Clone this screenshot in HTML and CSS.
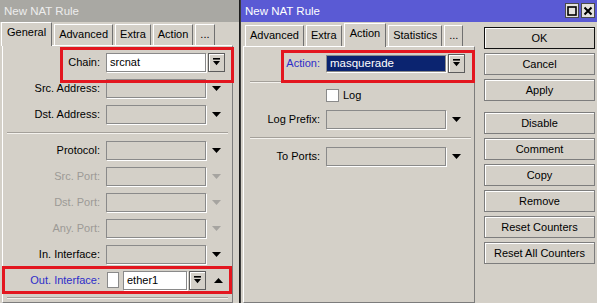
FILE: index.html
```html
<!DOCTYPE html>
<html lang="en">
<head>
    <meta charset="UTF-8">
    <title>New NAT Rule</title>
    <link rel="stylesheet" href="styles.css">
</head>
<body>
    <div class="screen">
        <!-- left window: General tab -->
        <div class="win win-left">
            <div class="titlebar">New NAT Rule</div>
            <div class="tabs">
                <span class="tab active">General</span>
                <span class="tab">Advanced</span>
                <span class="tab">Extra</span>
                <span class="tab">Action</span>
                <span class="tab">...</span>
            </div>
            <div class="panel">
                <div class="row">
                    <span class="lbl">Chain:</span>
                    <span class="field fill">srcnat</span>
                    <span class="dd"><svg width="9" height="8" viewBox="0 0 9 8"><rect x="1" y="0" width="7" height="1.6"/><path d="M1 3h7l-3.5 4.2z"/></svg></span>
                </div>
                <div class="row">
                    <span class="lbl">Src. Address:</span>
                    <span class="field"></span>
                    <svg class="arr" width="9" height="5" viewBox="0 0 9 5"><path d="M0 0h9l-4.5 5z"/></svg>
                </div>
                <div class="row">
                    <span class="lbl">Dst. Address:</span>
                    <span class="field"></span>
                    <svg class="arr" width="9" height="5" viewBox="0 0 9 5"><path d="M0 0h9l-4.5 5z"/></svg>
                </div>
                <div class="sep"></div>
                <div class="row">
                    <span class="lbl">Protocol:</span>
                    <span class="field"></span>
                    <svg class="arr" width="9" height="5" viewBox="0 0 9 5"><path d="M0 0h9l-4.5 5z"/></svg>
                </div>
                <div class="row dim">
                    <span class="lbl">Src. Port:</span>
                    <span class="field"></span>
                    <svg class="arr" width="9" height="5" viewBox="0 0 9 5"><path d="M0 0h9l-4.5 5z"/></svg>
                </div>
                <div class="row dim">
                    <span class="lbl">Dst. Port:</span>
                    <span class="field"></span>
                    <svg class="arr" width="9" height="5" viewBox="0 0 9 5"><path d="M0 0h9l-4.5 5z"/></svg>
                </div>
                <div class="row dim">
                    <span class="lbl">Any. Port:</span>
                    <span class="field"></span>
                    <svg class="arr" width="9" height="5" viewBox="0 0 9 5"><path d="M0 0h9l-4.5 5z"/></svg>
                </div>
                <div class="row">
                    <span class="lbl">In. Interface:</span>
                    <span class="field"></span>
                    <svg class="arr" width="9" height="5" viewBox="0 0 9 5"><path d="M0 0h9l-4.5 5z"/></svg>
                </div>
                <div class="row">
                    <span class="lbl blue">Out. Interface:</span>
                    <span class="check tall"></span>
                    <span class="field fill short">ether1</span>
                    <span class="dd"><svg width="9" height="8" viewBox="0 0 9 8"><rect x="1" y="0" width="7" height="1.6"/><path d="M1 3h7l-3.5 4.2z"/></svg></span>
                    <svg class="arr up" width="9" height="5" viewBox="0 0 9 5"><path d="M0 5h9l-4.5-5z"/></svg>
                </div>
                <div class="sep low"></div>
            </div>
            <div class="mark mark-chain"></div>
            <div class="mark mark-out"></div>
        </div>

        <!-- right window: Action tab -->
        <div class="win win-right">
            <div class="titlebar">
                <span>New NAT Rule</span>
                <span class="tb-btns">
                    <span class="tb-btn"><svg width="10" height="10" viewBox="0 0 10 10"><rect x="1" y="1" width="8" height="8" fill="none" stroke="#000" stroke-width="1.6"/></svg></span>
                    <span class="tb-btn"><svg width="10" height="10" viewBox="0 0 10 10"><path d="M1.5 1.5l7 7M8.5 1.5l-7 7" stroke="#000" stroke-width="2"/></svg></span>
                </span>
            </div>
            <div class="rbody">
                <div class="rmain">
                    <div class="tabs">
                        <span class="tab">Advanced</span>
                        <span class="tab">Extra</span>
                        <span class="tab active">Action</span>
                        <span class="tab">Statistics</span>
                        <span class="tab">...</span>
                    </div>
                    <div class="panel">
                        <div class="row">
                            <span class="lbl blue">Action:</span>
                            <span class="field sel">masquerade</span>
                            <span class="dd"><svg width="9" height="8" viewBox="0 0 9 8"><rect x="1" y="0" width="7" height="1.6"/><path d="M1 3h7l-3.5 4.2z"/></svg></span>
                        </div>
                        <div class="sep"></div>
                        <div class="row small">
                            <span class="lbl"></span>
                            <span class="check"></span>
                            <span class="check-text">Log</span>
                        </div>
                        <div class="row">
                            <span class="lbl">Log Prefix:</span>
                            <span class="field"></span>
                            <svg class="arr" width="9" height="5" viewBox="0 0 9 5"><path d="M0 0h9l-4.5 5z"/></svg>
                        </div>
                        <div class="sep wide"></div>
                        <div class="row">
                            <span class="lbl">To Ports:</span>
                            <span class="field"></span>
                            <svg class="arr" width="9" height="5" viewBox="0 0 9 5"><path d="M0 0h9l-4.5 5z"/></svg>
                        </div>
                    </div>
                </div>
                <div class="actions">
                    <span class="btn default">OK</span>
                    <span class="btn">Cancel</span>
                    <span class="btn">Apply</span>
                    <span class="btn gap">Disable</span>
                    <span class="btn">Comment</span>
                    <span class="btn">Copy</span>
                    <span class="btn">Remove</span>
                    <span class="btn">Reset Counters</span>
                    <span class="btn">Reset All Counters</span>
                </div>
            </div>
            <div class="mark mark-action"></div>
        </div>
    </div>
</body>
</html>
```

FILE: styles.css
```css
* {
    margin: 0;
    padding: 0;
    box-sizing: border-box;
}

body {
    width: 597px;
    height: 303px;
    overflow: hidden;
    background: #d4d0c8;
    font-family: "Liberation Sans", Arial, sans-serif;
    font-size: 11px;
    color: #000;
}

.screen {
    display: flex;
    height: 303px;
}

.win {
    position: relative;
    display: flex;
    flex-direction: column;
    background: #d4d0c8;
}

.win-left {
    width: 240px;
    border-right: 1px solid #1c1c1c;
}

.win-right {
    flex: 1;
    border-left: 1px solid #3a3a3a;
}

.titlebar {
    height: 22px;
    padding-left: 4px;
    line-height: 22px;
    font-size: 11.5px;
}

.win-left .titlebar {
    background: #a9a8a3;
    color: #ededed;
}

.win-right .titlebar {
    background: #5a5ad4;
    color: #fff;
    display: flex;
    justify-content: space-between;
}

.tb-btns {
    display: flex;
    gap: 2px;
    padding: 3px 2px 0 0;
}

.tb-btn {
    width: 14px;
    height: 15px;
    background: #e4e2de;
    border: 1px solid #4a4a4a;
    display: flex;
    align-items: center;
    justify-content: center;
}

/* tabs */
.tabs {
    display: flex;
    align-items: flex-end;
    height: 24px;
    padding-left: 1px;
}

.rmain .tabs {
    padding-left: 4px;
}

.tab {
    height: 21px;
    padding: 0 4px;
    line-height: 19px;
    border: 1px solid;
    border-color: #fff #707070 transparent #fff;
    border-bottom: none;
    margin-right: 2px;
    white-space: nowrap;
}

.tab.active {
    height: 24px;
    margin-bottom: -1px;
    position: relative;
    z-index: 1;
    background: #d4d0c8;
    line-height: 19px;
    padding: 0 5px;
}

.panel {
    flex: 1;
    border: 1px solid;
    border-color: #fff #7c7c7c #7c7c7c #fff;
    margin: 0 6px 0 2px;
    padding-top: 3px;
}

.rbody {
    flex: 1;
    display: flex;
}

.rmain {
    width: 234px;
    display: flex;
    flex-direction: column;
}

.rmain .panel {
    margin: 0 0 0 2px;
    width: 232px;
}

/* form rows */
.row {
    display: flex;
    align-items: center;
    height: 26px;
}

.row.small {
    height: 22px;
}

.lbl {
    width: 97px;
    margin-right: 6px;
    text-align: right;
    white-space: nowrap;
}

.rmain .lbl {
    width: 76px;
}

.blue {
    color: #2d2dc8;
}

.dim .lbl {
    color: #9c9a96;
}

.field {
    width: 100px;
    height: 19px;
    border: 1px solid #8a8a8a;
    box-shadow: 1px 1px 0 #fff;
    padding-left: 3px;
    line-height: 17px;
}

.rmain .field {
    width: 120px;
}

.field.fill {
    background: #fff;
}

.field.short {
    width: 64px;
}

.field.sel {
    background: #0b2470;
    color: #fff;
    height: 17px;
    line-height: 15px;
    font-size: 11.5px;
}

.dd {
    width: 17px;
    height: 19px;
    margin-left: 2px;
    border: 1px solid #5c5c5c;
    box-shadow: inset 1px 1px #fff;
    display: flex;
    align-items: center;
    justify-content: center;
}

.arr {
    margin-left: 6px;
    fill: #000;
}

.arr.up {
    margin-left: 8px;
}

.dim .arr {
    fill: #a6a4a0;
}

.check {
    width: 13px;
    height: 13px;
    background: #fff;
    border: 1px solid #8a8a8a;
}

.check.tall {
    width: 12px;
    height: 16px;
    margin: 0 4px 0 1px;
}

.check-text {
    margin-left: 4px;
}

.sep {
    height: 2px;
    border-top: 1px solid #a4a09a;
    border-bottom: 1px solid #f4f2ee;
    margin: 5px 4px 3px 4px;
}

.sep.low {
    margin-top: 4px;
}

.rmain .sep {
    margin: 5px 3px 1px 6px;
}

.rmain .sep.wide {
    margin-bottom: 4px;
}

/* buttons column */
.actions {
    width: 111px;
    margin-left: 9px;
    padding-top: 5px;
    display: flex;
    flex-direction: column;
    gap: 4px;
}

.btn {
    height: 22px;
    border: 1px solid #7d7d7d;
    box-shadow: inset 1px 1px #fff;
    text-align: center;
    line-height: 20px;
    white-space: nowrap;
}

.btn.default {
    border-color: #111;
}

.btn.gap {
    margin-top: 7px;
}

/* red highlight boxes drawn over the dialogs */
.mark {
    position: absolute;
    border: 3px solid #e3161f;
    z-index: 2;
}

.mark-chain {
    left: 60px;
    top: 47px;
    width: 174px;
    height: 36px;
}

.mark-out {
    left: 2px;
    top: 266px;
    width: 230px;
    height: 28px;
}

.mark-action {
    left: 40px;
    top: 50px;
    width: 194px;
    height: 33px;
}
```
